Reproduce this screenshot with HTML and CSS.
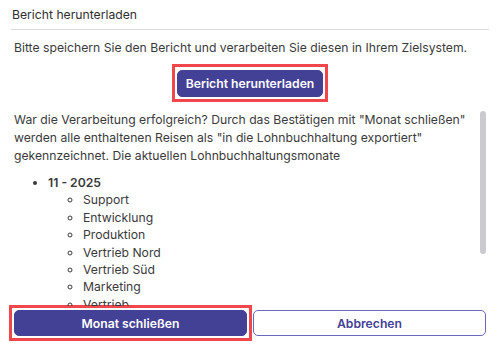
FILE: index.html
```html
<!doctype html>
<html lang="de">
<head>
    <meta charset="utf-8">
    <title>Bericht herunterladen</title>
    <link rel="stylesheet" href="styles.css">
</head>
<body>
<div class="dialog">
    <div class="dialog-title">Bericht herunterladen</div>

    <p class="intro">Bitte speichern Sie den Bericht und verarbeiten Sie diesen in Ihrem Zielsystem.</p>

    <div class="download-row">
        <span class="marker">
            <button type="button" class="btn btn-primary btn-download">Bericht herunterladen</button>
        </span>
    </div>

    <div class="scroll-area">
        <div class="scroll-content">
            <p class="info">War die Verarbeitung erfolgreich? Durch das Bestätigen mit "Monat schließen" werden alle enthaltenen Reisen als "in die Lohnbuchhaltung exportiert" gekennzeichnet. Die aktuellen Lohnbuchhaltungsmonate</p>
            <ul class="months">
                <li>
                    <span class="month">11 - 2025</span>
                    <ul class="departments">
                        <li>Support</li>
                        <li>Entwicklung</li>
                        <li>Produktion</li>
                        <li>Vertrieb Nord</li>
                        <li>Vertrieb Süd</li>
                        <li>Marketing</li>
                        <li>Vertrieb</li>
                        <li>Verwaltung</li>
                    </ul>
                </li>
            </ul>
        </div>
        <div class="scroll-thumb"></div>
    </div>

    <div class="dialog-footer">
        <span class="marker marker-footer">
            <button type="button" class="btn btn-primary">Monat schließen</button>
        </span>
        <button type="button" class="btn btn-outline">Abbrechen</button>
    </div>
</div>
</body>
</html>
```

FILE: styles.css
```css
body {
    margin: 0;
    background: #ffffff;
    color: #3a3a3a;
    font-family: Inter, "Noto Sans", sans-serif;
    font-size: 12.2px;
}

.dialog {
    padding: 0 10px 0 11px;
}

.dialog-title {
    padding: 7px 1px 0;
    line-height: 16px;
    color: #2e2e2e;
    border-bottom: 1px solid #dcdcdc;
    box-sizing: border-box;
    height: 30px;
}

.intro {
    margin: 9px 0 0 3px;
    line-height: 17px;
}

.download-row {
    display: flex;
    justify-content: center;
    padding-top: 8px;
}

/* red annotation frame */
.marker {
    display: inline-flex;
    border: 3px solid #f0474d;
    padding: 2px;
}

.download-row .marker {
    padding-top: 3px;
}

.btn {
    font-family: Inter, "Noto Sans", sans-serif;
    font-size: 12.2px;
    font-weight: 600;
    height: 26px;
    border-radius: 5px;
    cursor: pointer;
}

.btn-primary {
    background: #434195;
    color: #ffffff;
    border: 1px solid #434195;
}

.btn-outline {
    background: #ffffff;
    color: #434195;
    border: 1px solid #6a69c0;
}

.btn-download {
    height: 27px;
    padding: 0 8px;
}

.scroll-area {
    position: relative;
    height: 204px;
    overflow: hidden;
}

.scroll-content {
    padding: 9px 0 0 3px;
}

.scroll-thumb {
    position: absolute;
    top: 9px;
    right: 3px;
    width: 6px;
    height: 143px;
    border-radius: 3px;
    background: #cbcbcf;
}

.info {
    margin: 0 14px 0 0;
    line-height: 18px;
}

.months {
    margin: 9px 0 0;
    padding-left: 34px;
    line-height: 17.4px;
}

.month {
    font-weight: 600;
}

.departments {
    list-style-type: circle;
    margin: 0;
    padding-left: 35px;
}

.dialog-footer {
    display: flex;
    align-items: center;
    gap: 1px;
    margin-top: -1px;
    margin-left: -2px;
    margin-right: 3px;
}

.marker-footer {
    flex: 0 0 243px;
    box-sizing: border-box;
}

.marker-footer .btn {
    flex: 1;
}

.dialog-footer > .btn-outline {
    flex: 1;
}
```
